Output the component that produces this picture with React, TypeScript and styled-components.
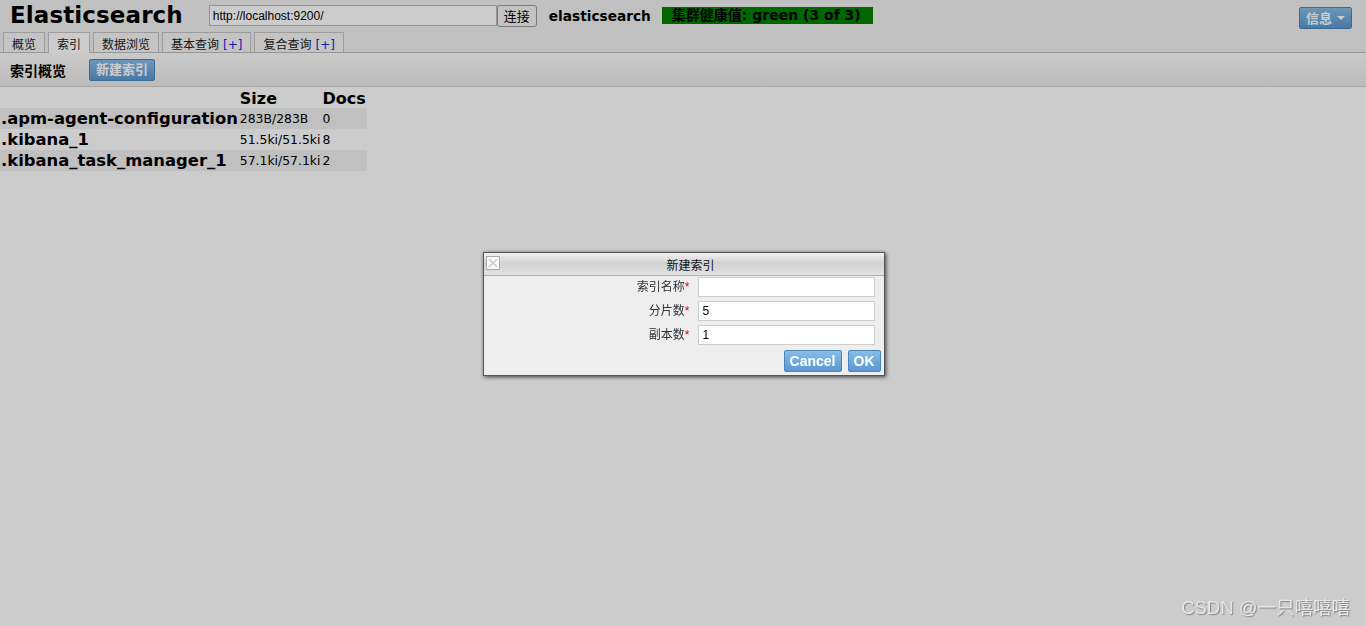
import * as React from 'react';
import styled, { createGlobalStyle } from 'styled-components';

const GlobalStyle = createGlobalStyle`
  html, body {
    margin: 0;
    padding: 0;
    background: #ffffff;
    height: 100%;
  }
  body {
    font-family: "DejaVu Sans", "Noto Sans CJK SC", sans-serif;
    font-size: 12px;
    color: #000;
  }
`;

const verdana = `"DejaVu Sans", "Noto Sans CJK SC", sans-serif`;
const arial = `"Liberation Sans", "Noto Sans CJK SC", sans-serif`;

const Page = styled.div`
  min-height: 626px;
  background: #fff;
`;

const Header = styled.div`
  background: #f0f0f0;
`;

const TopBar = styled.div`
  display: flex;
  align-items: center;
  height: 31px;
  padding: 0 14px 0 10px;
`;

const Title = styled.h1`
  margin: 0;
  font-family: ${verdana};
  font-size: 23px;
  font-weight: bold;
  color: #000;
  line-height: 33px;
  letter-spacing: 0.1px;
`;

const UrlInput = styled.input`
  margin-left: 26px;
  width: 288px;
  height: 21px;
  box-sizing: border-box;
  border: 1px solid #b8b8b8;
  background: #fff;
  font-family: ${arial};
  font-size: 12px;
  padding: 0 3px;
  color: #000;
  outline: none;
`;

const ConnectButton = styled.button`
  height: 22px;
  margin-left: 0;
  padding: 0 6px;
  font-family: ${arial};
  font-size: 13px;
  background: #f4f4f4;
  border: 1px solid #999;
  border-radius: 3px;
  color: #000;
`;

const ClusterName = styled.span`
  margin-left: 12px;
  font-family: ${verdana};
  font-size: 13.7px;
  font-weight: bold;
`;

const Health = styled.span<{ $status: string }>`
  margin-left: 11px;
  width: 211px;
  height: 17px;
  box-sizing: border-box;
  padding-left: 10px;
  background: ${(p) => (p.$status === 'green' ? '#008000' : '#d0b000')};
  font-family: ${verdana};
  font-size: 14px;
  font-weight: bold;
  line-height: 17px;
  color: #000;
  white-space: nowrap;
  overflow: hidden;
`;

const Spacer = styled.div`
  flex: 1;
`;

const BlueButton = styled.button<{ $dialog?: boolean }>`
  height: 22px;
  padding: 0 ${(p) => (p.$dialog ? 5 : 6)}px;
  border: 1px solid #4b84b8;
  border-radius: 2px;
  background: linear-gradient(#86bde9, #5b98cf);
  color: #fff;
  font-family: ${(p) => (p.$dialog ? arial : verdana)};
  font-weight: bold;
  font-size: ${(p) => (p.$dialog ? 14 : 13)}px;
  line-height: 1;
  display: inline-flex;
  align-items: center;
  gap: 5px;
`;

const InfoButton = styled(BlueButton)`
  margin-top: 5px;
  padding: 0 6px 0 6px;
`;

const Caret = styled.span`
  width: 0;
  height: 0;
  border-left: 4px solid transparent;
  border-right: 4px solid transparent;
  border-top: 4px solid #fff;
`;

const Tabs = styled.div`
  display: flex;
  gap: 3px;
  padding: 0 0 0 3px;
  height: 21px;
  align-items: flex-end;
  border-bottom: 1px solid #bcbcbc;
`;

const Tab = styled.div<{ $active?: boolean }>`
  box-sizing: border-box;
  padding: 0 8px;
  border: 1px solid #c4c4c4;
  border-bottom: none;
  background: ${(p) => (p.$active ? '#ffffff' : '#f6f6f6')};
  font-family: ${verdana};
  font-size: 12px;
  line-height: 25px;
  color: #222;
  margin-bottom: ${(p) => (p.$active ? '-1px' : '0')};
  height: ${(p) => (p.$active ? '21px' : '20px')};
  white-space: nowrap;
  overflow: hidden;
`;

const Plus = styled.span`
  color: #2020e0;
  margin-left: 4px;
`;

const Toolbar = styled.div`
  display: flex;
  align-items: center;
  gap: 23px;
  height: 33px;
  padding-left: 10px;
  background: linear-gradient(#fdfdfd, #eaeaea);
  border-bottom: 1px solid #d2d2d2;
`;

const ToolbarLabel = styled.span`
  font-family: ${verdana};
  font-size: 14px;
  font-weight: bold;
`;

const IndexTable = styled.table`
  border-collapse: collapse;
  margin-top: 2px;
`;

const HeadCell = styled.th`
  text-align: left;
  font-family: ${verdana};
  font-size: 16px;
  font-weight: bold;
  padding: 0 1px;
  height: 19px;
  line-height: 18px;
`;

const Row = styled.tr<{ $striped: boolean }>`
  background: ${(p) => (p.$striped ? '#f0f0f0' : 'transparent')};
`;

const NameCell = styled.td`
  font-family: ${verdana};
  font-size: 16.4px;
  font-weight: bold;
  padding: 0 1px;
  height: 21px;
  white-space: nowrap;
`;

const StatCell = styled.td`
  font-family: ${verdana};
  font-size: 12.4px;
  padding: 0 1px;
  white-space: nowrap;
`;

const Overlay = styled.div`
  position: fixed;
  inset: 0;
  background: rgba(0, 0, 0, 0.2);
  display: flex;
  align-items: center;
  justify-content: center;
`;

const Dialog = styled.div`
  width: 402px;
  box-sizing: border-box;
  border: 1px solid #555;
  background: #eeeeee;
  box-shadow: 1px 1px 4px rgba(0, 0, 0, 0.7);
  margin: 2px 0 0 1px;
`;

const DialogTitle = styled.div`
  position: relative;
  height: 22px;
  padding-left: 14px;
  background: linear-gradient(#f2f2f2, #d2d2d2 45%, #e2e2e2);
  border-bottom: 1px solid #b0b0b0;
  display: flex;
  align-items: center;
  justify-content: center;
  font-family: ${arial};
  font-size: 12px;
  color: #111;
`;

const CloseBox = styled.span`
  position: absolute;
  left: 2px;
  top: 3px;
  width: 14px;
  height: 14px;
  box-sizing: border-box;
  border: 1px solid #aaa;
  background: #f8f8f8;
  display: flex;
  align-items: center;
  justify-content: center;
`;

const Form = styled.div`
  display: grid;
  grid-template-columns: 1fr 177px;
  column-gap: 8px;
  row-gap: 4px;
  padding: 1px 9px 0 0;
`;

const Label = styled.label`
  text-align: right;
  font-family: ${arial};
  font-size: 12px;
  color: #333;
  line-height: 20px;
  align-self: center;
`;

const Required = styled.span`
  color: #d00;
`;

const Field = styled.input`
  height: 20px;
  box-sizing: border-box;
  border: 1px solid #ccc;
  background: #fff;
  font-family: ${arial};
  font-size: 12px;
  padding: 0 4px;
  outline: none;
`;

const DialogFooter = styled.div`
  display: flex;
  justify-content: flex-end;
  gap: 6px;
  padding: 5px 3px 3px 0;
`;

const Watermark = styled.div`
  position: fixed;
  right: 16px;
  bottom: 7px;
  font-family: ${arial};
  font-size: 18.5px;
  color: #e6e6e6;
  text-shadow: 1px 1px 1px rgba(0, 0, 0, 0.35);
`;

const indices = [
  { name: '.apm-agent-configuration', size: '283B/283B', docs: 0 },
  { name: '.kibana_1', size: '51.5ki/51.5ki', docs: 8 },
  { name: '.kibana_task_manager_1', size: '57.1ki/57.1ki', docs: 2 },
];

const tabs = [
  { label: '概览' },
  { label: '索引', active: true },
  { label: '数据浏览' },
  { label: '基本查询', plus: true },
  { label: '复合查询', plus: true },
];

export default function App() {
  return (
    <>
      <GlobalStyle />
      <Page>
        <Header>
          <TopBar>
            <Title>Elasticsearch</Title>
            <UrlInput defaultValue="http://localhost:9200/" />
            <ConnectButton>连接</ConnectButton>
            <ClusterName>elasticsearch</ClusterName>
            <Health $status="green">集群健康值: green (3 of 3)</Health>
            <Spacer />
            <InfoButton>
              信息 <Caret />
            </InfoButton>
          </TopBar>
          <Tabs>
            {tabs.map((t) => (
              <Tab key={t.label} $active={t.active}>
                {t.label}
                {t.plus && <Plus>[+]</Plus>}
              </Tab>
            ))}
          </Tabs>
        </Header>
        <Toolbar>
          <ToolbarLabel>索引概览</ToolbarLabel>
          <BlueButton>新建索引</BlueButton>
        </Toolbar>
        <IndexTable>
          <thead>
            <tr>
              <HeadCell />
              <HeadCell>Size</HeadCell>
              <HeadCell>Docs</HeadCell>
            </tr>
          </thead>
          <tbody>
            {indices.map((idx, i) => (
              <Row key={idx.name} $striped={i % 2 === 0}>
                <NameCell>{idx.name}</NameCell>
                <StatCell>{idx.size}</StatCell>
                <StatCell>{idx.docs}</StatCell>
              </Row>
            ))}
          </tbody>
        </IndexTable>
      </Page>
      <Overlay>
        <Dialog>
          <DialogTitle>
            <CloseBox>
              <svg width="10" height="10" viewBox="0 0 10 10">
                <path d="M1 1 L9 9 M9 1 L1 9" stroke="#ccc" strokeWidth="1.6" fill="none" />
              </svg>
            </CloseBox>
            新建索引
          </DialogTitle>
          <Form>
            <Label>
              索引名称<Required>*</Required>
            </Label>
            <Field defaultValue="" />
            <Label>
              分片数<Required>*</Required>
            </Label>
            <Field defaultValue="5" />
            <Label>
              副本数<Required>*</Required>
            </Label>
            <Field defaultValue="1" />
          </Form>
          <DialogFooter>
            <BlueButton $dialog>Cancel</BlueButton>
            <BlueButton $dialog>OK</BlueButton>
          </DialogFooter>
        </Dialog>
      </Overlay>
      <Watermark>CSDN @一只嘻嘻嘻</Watermark>
    </>
  );
}
